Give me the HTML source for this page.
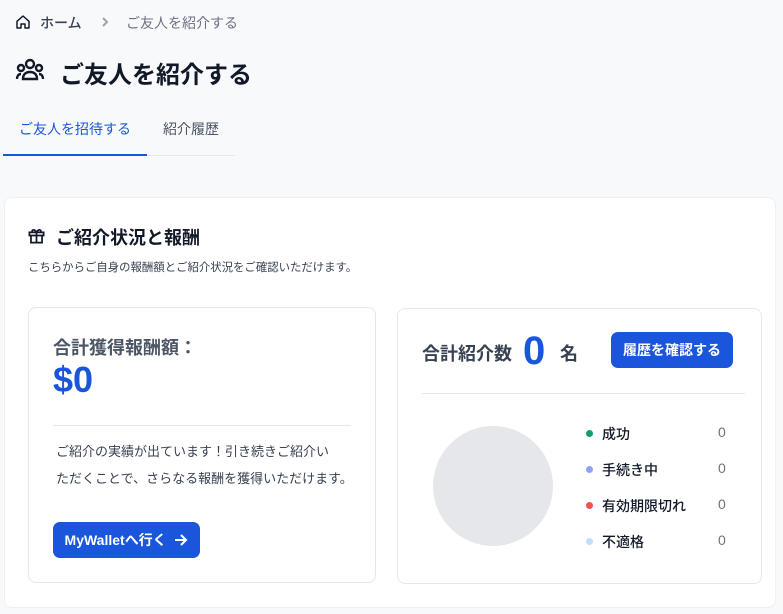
<!DOCTYPE html>
<html><head><meta charset="utf-8"><style>
*{margin:0;padding:0;box-sizing:border-box}
body{width:783px;height:614px;background:#f8f9fb;font-family:"Liberation Sans","Noto Sans CJK JP",sans-serif;color:#111827;position:relative;overflow:hidden}
.a{position:absolute;white-space:nowrap}
.card{position:absolute;background:#fff;border:1px solid #e5e7eb;border-radius:8px}
.btn{position:absolute;background:#1a56db;color:#fff;border-radius:7px;font-weight:bold;font-size:14px;display:flex;align-items:center;justify-content:center}
.dot{position:absolute;width:7px;height:7px;border-radius:50%}
.lg{position:absolute;font-size:14px;color:#111827;font-weight:500}
.v{position:absolute;font-size:14px;color:#6b7280;left:718px}
</style></head><body>
<svg class="a" style="left:15px;top:14px" width="16" height="16" viewBox="0 0 24 24" fill="none" stroke="#111827" stroke-width="2.2" stroke-linejoin="round"><path d="M3 11 12 3l9 8v10h-6v-6H9v6H3z"/></svg>
<div class="a" style="left:40px;top:13px;font-size:14px;color:#374151;font-weight:500">ホーム</div>
<svg class="a" style="left:100px;top:16px" width="10" height="12" viewBox="0 0 10 12"><path d="M3 2l4 4-4 4" stroke="#9ca3af" stroke-width="2" fill="none"/></svg>
<div class="a" style="left:126px;top:13px;font-size:14px;color:#6b7280">ご友人を紹介する</div>
<svg class="a" style="left:15px;top:58px" width="30" height="24" viewBox="0 0 30 24" fill="none" stroke="#111827" stroke-width="2.4"><circle cx="15" cy="6" r="4"/><circle cx="6" cy="10" r="3"/><circle cx="24" cy="10" r="3"/><path d="M8 21c0-5 3-7 7-7s7 2 7 7z"/><path d="M2 21c0-3 1.5-5 4-5M28 21c0-3-1.5-5-4-5"/></svg>
<div class="a" style="left:60px;top:55px;font-size:24px;font-weight:bold">ご友人を紹介する</div>
<div class="a" style="left:19px;top:119px;font-size:14px;color:#1a56db">ご友人を招待する</div>
<div class="a" style="left:163px;top:119px;font-size:14px;color:#4b5563">紹介履歴</div>
<div class="a" style="left:3px;top:155px;width:232px;height:1px;background:#e5e7eb"></div>
<div class="a" style="left:3px;top:154px;width:144px;height:2px;background:#1a56db"></div>

<div class="card" style="left:4px;top:197px;width:772px;height:411px;border-color:#eef0f3"></div>
<svg class="a" style="left:27px;top:226px" width="19" height="19" viewBox="0 0 24 24" fill="none" stroke="#111827" stroke-width="2.2"><rect x="3" y="8" width="18" height="4"/><path d="M5 12v9h14v-9M12 8v13M12 8C9 3 5 5 7 8M12 8c3-5 7-3 5 0"/></svg>
<div class="a" style="left:56px;top:224px;font-size:18px;font-weight:bold">ご紹介状況と報酬</div>
<div class="a" style="left:28px;top:259px;font-size:11.4px;color:#374151">こちらからご自身の報酬額とご紹介状況をご確認いただけます。</div>

<div class="card" style="left:28px;top:307px;width:348px;height:276px"></div>
<div class="a" style="left:53px;top:334px;font-size:18px;font-weight:bold;color:#4b5563">合計獲得報酬額：</div>
<div class="a" style="left:53px;top:359px;font-size:36px;font-weight:bold;color:#1a56db">$0</div>
<div class="a" style="left:53px;top:425px;width:298px;height:1px;background:#e5e7eb"></div>
<div class="a" style="left:56px;top:438px;font-size:13px;line-height:27px;color:#374151">ご紹介の実績が出ています！引き続きご紹介い<br>ただくことで、さらなる報酬を獲得いただけます。</div>
<div class="btn" style="left:53px;top:522px;width:147px;height:36px">MyWalletへ行く&nbsp;&nbsp;<svg width="14" height="14" viewBox="0 0 14 14" fill="none" stroke="#fff" stroke-width="2"><path d="M1 7h11M7 2l5 5-5 5"/></svg></div>

<div class="card" style="left:397px;top:308px;width:365px;height:276px"></div>
<div class="a" style="left:422px;top:340px;font-size:18px;font-weight:bold;color:#374151">合計紹介数</div>
<div class="a" style="left:523px;top:329px;font-size:40px;font-weight:bold;color:#1a56db">0</div>
<div class="a" style="left:560px;top:340px;font-size:18px;font-weight:bold;color:#374151">名</div>
<div class="btn" style="left:611px;top:332px;width:122px;height:36px">履歴を確認する</div>
<div class="a" style="left:422px;top:393px;width:323px;height:1px;background:#e5e7eb"></div>
<div class="a" style="left:433px;top:426px;width:120px;height:120px;border-radius:50%;background:#e5e7eb"></div>
<div class="dot" style="left:586px;top:430px;background:#0e9f6e"></div>
<div class="dot" style="left:586px;top:466px;background:#8da2fb"></div>
<div class="dot" style="left:586px;top:502px;background:#f05252"></div>
<div class="dot" style="left:586px;top:538px;background:#c3ddfd"></div>
<div class="lg" style="left:602px;top:424px">成功</div>
<div class="lg" style="left:602px;top:460px">手続き中</div>
<div class="lg" style="left:602px;top:496px">有効期限切れ</div>
<div class="lg" style="left:602px;top:532px">不適格</div>
<div class="v" style="top:424px">0</div>
<div class="v" style="top:460px">0</div>
<div class="v" style="top:496px">0</div>
<div class="v" style="top:532px">0</div>
</body></html>
